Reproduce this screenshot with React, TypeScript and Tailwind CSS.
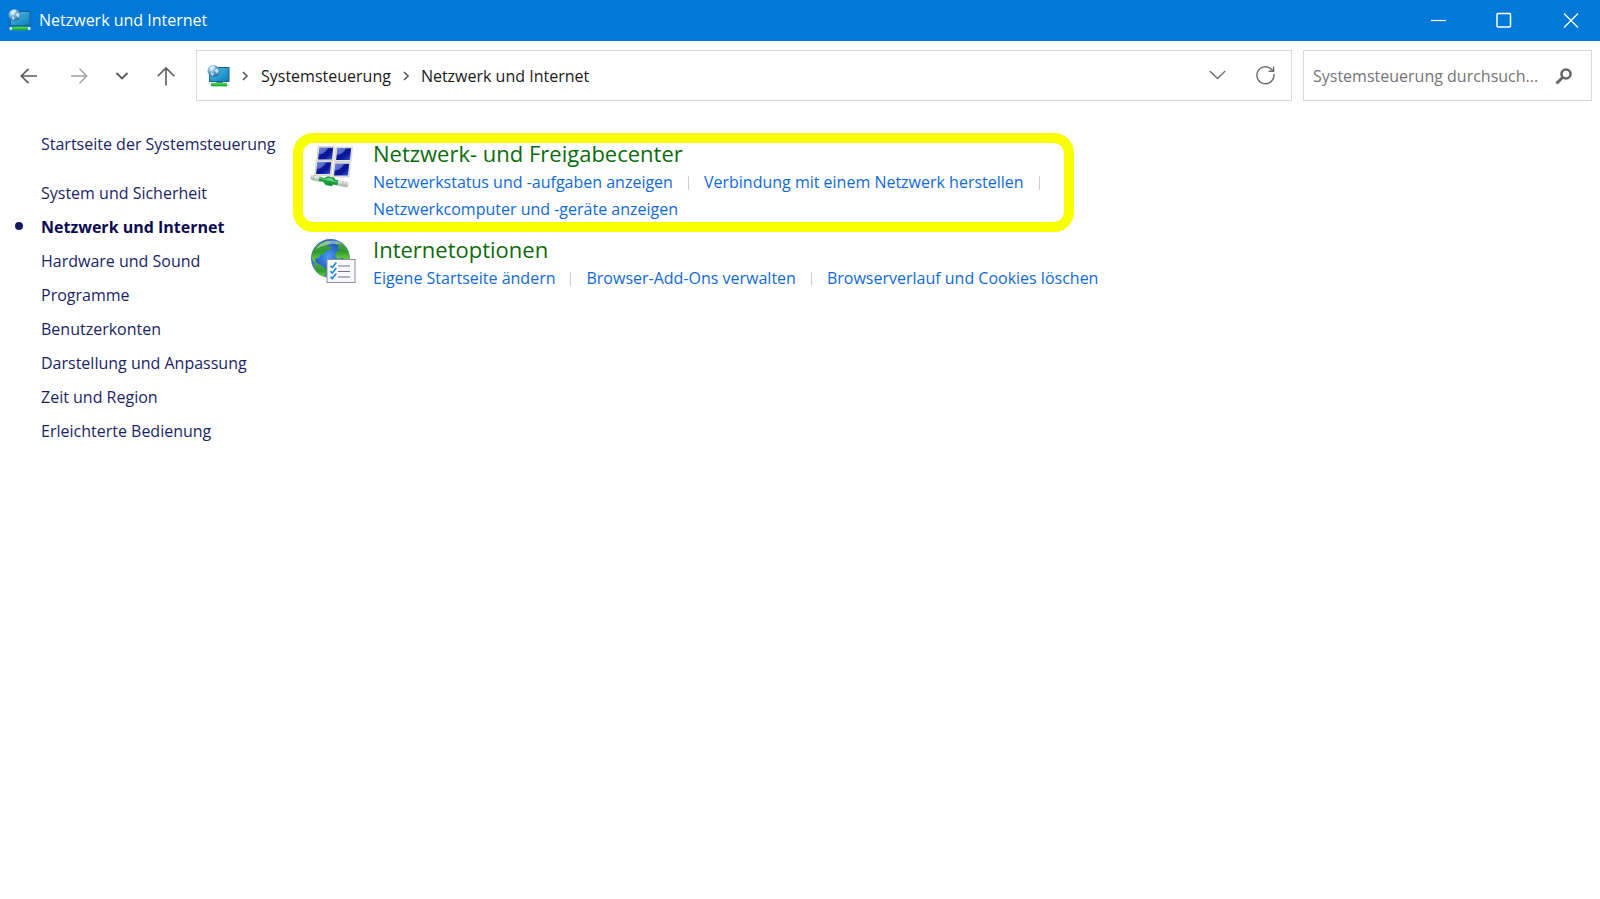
import { ReactNode } from 'react';

type Category = {
  title: string;
  icon: ReactNode;
  links: string[][];
  highlighted?: boolean;
};

const SIDEBAR_ITEMS = [
  'System und Sicherheit',
  'Netzwerk und Internet',
  'Hardware und Sound',
  'Programme',
  'Benutzerkonten',
  'Darstellung und Anpassung',
  'Zeit und Region',
  'Erleichterte Bedienung',
];

const ACTIVE_ITEM = 'Netzwerk und Internet';

const CATEGORIES: Category[] = [
  {
    title: 'Netzwerk- und Freigabecenter',
    icon: <SharingCenterIcon />,
    links: [
      ['Netzwerkstatus und -aufgaben anzeigen', 'Verbindung mit einem Netzwerk herstellen'],
      ['Netzwerkcomputer und -geräte anzeigen'],
    ],
    highlighted: true,
  },
  {
    title: 'Internetoptionen',
    icon: <InternetOptionsIcon />,
    links: [['Eigene Startseite ändern', 'Browser-Add-Ons verwalten', 'Browserverlauf und Cookies löschen']],
  },
];

function NetworkIcon({ id }: { id: string }) {
  return (
    <svg viewBox="0 0 24 24" className="h-6 w-6 shrink-0" aria-hidden="true">
      <defs>
        <linearGradient id={`${id}-screen`} x1="0" y1="0" x2="1" y2="1">
          <stop offset="0" stopColor="#5fbfe4" />
          <stop offset="0.5" stopColor="#2b9fd0" />
          <stop offset="1" stopColor="#0f7fc0" />
        </linearGradient>
        <radialGradient id={`${id}-globe`} cx="0.35" cy="0.3" r="0.8">
          <stop offset="0" stopColor="#c9e6f5" />
          <stop offset="0.5" stopColor="#62a5d0" />
          <stop offset="1" stopColor="#1b5f96" />
        </radialGradient>
      </defs>
      <rect x="2" y="3" width="20.5" height="15" rx="0.6" fill="#1c5f86" />
      <rect x="3" y="4" width="18.5" height="13" fill={`url(#${id}-screen)`} />
      <path d="M9.500 18h6l0.500 1.500h-7z" fill="#3c7d9a" />
      <rect x="1.500" y="19" width="21" height="3" rx="1" fill="#e3eaea" />
      <rect x="4" y="18.800" width="16" height="3.400" fill="#3ecf4c" />
      <rect x="4" y="20.800" width="16" height="1.400" fill="#1fa535" />
      <circle cx="6.500" cy="7" r="6" fill={`url(#${id}-globe)`} />
      <path d="M3 4c1.500-2 3.500-2.500 5-1.500 0.500 1-0.500 1.500-1 2-0.500 1.500-2 1.500-2.500 2.500-1-0.500-2-1.500-1.500-3zM8.500 5.500c1-0.800 2.500-0.500 3 0.500 0.300 1.500 0 2.500-1 3.500-1 0-1.200-1.200-2-1.500-0.600-0.800-0.500-1.800 0-2.500zM4.500 8.500c1 0 2 1 2 2-0.300 0.800-0.800 1.200-1.200 1.500-1-0.800-1.500-2.300-0.800-3.500z" fill="#e2f3fb" opacity="0.8" />
    </svg>
  );
}

function Monitor({ x, y }: { x: number; y: number }) {
  return (
    <g transform={`translate(${x} ${y})`}>
      <path d="M1.600 0h16.400l-1.400 14.500H0z" fill="#e4e4d9" stroke="#bdbdb2" strokeWidth="0.500" />
      <path d="M2.900 1.300h13.700l-1.200 11.600H1.600z" fill="url(#monitor-screen)" />
      <path d="M2.900 1.300h8.600c-1.500 3.700-4.500 6-9.200 6.700z" fill="#8fa2ee" opacity="0.55" />
    </g>
  );
}

function SharingCenterIcon() {
  return (
    <svg viewBox="0 0 46 46" className="h-[46px] w-[46px]" aria-hidden="true">
      <defs>
        <linearGradient id="monitor-screen" x1="0" y1="0" x2="1" y2="1">
          <stop offset="0" stopColor="#3b59cf" />
          <stop offset="0.450" stopColor="#0a1594" />
          <stop offset="0.650" stopColor="#0b1899" />
          <stop offset="1" stopColor="#3a5be0" />
        </linearGradient>
        <linearGradient id="cable" x1="0" y1="0" x2="0" y2="1">
          <stop offset="0" stopColor="#fafbfa" />
          <stop offset="1" stopColor="#a9b2ac" />
        </linearGradient>
      </defs>
      <Monitor x={6.500} y={3.500} />
      <Monitor x={24.500} y={4} />
      <Monitor x={4.500} y={18} />
      <Monitor x={22.500} y={19.500} />
      <g transform="rotate(12 19 38)">
        <rect x="0.500" y="35.500" width="11" height="4.800" rx="1.500" fill="url(#cable)" stroke="#a5aea7" strokeWidth="0.400" />
        <rect x="26" y="35.500" width="12.500" height="4.800" rx="1.500" fill="url(#cable)" stroke="#a5aea7" strokeWidth="0.400" />
        <path d="M9 36h5l3-2.500h6l2 2h3v5h-4l-1.500 2h-6l-3-2.500H9z" fill="#159a3c" />
        <path d="M10 36.800h5l3-2h4l1.500 2h3.500v1H10z" fill="#66d27a" />
        <path d="M3 35.500v4.800M33 35.500v4.800M36 35.500v4.800" stroke="#8f9a92" strokeWidth="0.600" />
      </g>
    </svg>
  );
}

function InternetOptionsIcon() {
  return (
    <svg viewBox="0 0 46 46" className="h-[46px] w-[46px]" aria-hidden="true">
      <defs>
        <radialGradient id="ocean" cx="0.450" cy="0.450" r="0.600">
          <stop offset="0" stopColor="#4a9af5" />
          <stop offset="0.600" stopColor="#2258c4" />
          <stop offset="1" stopColor="#7d9bcb" />
        </radialGradient>
        <linearGradient id="land" x1="0" y1="0" x2="0" y2="1">
          <stop offset="0" stopColor="#4f9f5c" />
          <stop offset="0.500" stopColor="#2f9c2c" />
          <stop offset="1" stopColor="#7bdc4a" />
        </linearGradient>
        <clipPath id="globe-edge">
          <circle cx="20.500" cy="19.500" r="19.500" />
        </clipPath>
      </defs>
      <circle cx="20.500" cy="19.500" r="19.500" fill="url(#ocean)" />
      <g clipPath="url(#globe-edge)" fill="url(#land)">
        <path d="M4 10C7 5 11 3 16 2l5 0-1 3-3 1 2 2 3-1-2 4-4 1-2 3-4 1-1 3-3 0-1 3 2 2-3-1-2-3 0-4z" />
        <path d="M3 24l4 0 4 2 4 3 2 3-2 4-1 4-5-2-3-5z" />
        <path d="M26 2l7 3 5 6 2 8-2 4-3 0-2-4-5 1-3-3 1-4 4-2-3-2 2-2-4-2z" />
        <path d="M26 21l5-1 5 2-3 8-6 5-2-6z" />
      </g>
      <path d="M6 10C11 2 24-1 32 5c-8-1-18 0-26 5z" fill="#fff" opacity="0.400" />
      <rect x="17" y="20.500" width="28" height="23" fill="#f7f8fb" stroke="#8c8f99" strokeWidth="1" />
      <path d="M28 27h12M28 32.500h12M28 38h12" stroke="#70747c" strokeWidth="1.100" />
      <path d="M20.500 26.700l1.800 1.800 4-5M20.500 32.200l1.800 1.800 4-5M20.500 37.700l1.800 1.800 4-5" fill="none" stroke="#1f86c9" strokeWidth="1.600" />
    </svg>
  );
}

function Stroke({ d, className, size = 20, width = 1.5 }: { d: string; className: string; size?: number; width?: number }) {
  return (
    <svg
      viewBox={`0 0 ${size} ${size}`}
      fill="none"
      stroke="currentColor"
      strokeWidth={width}
      className={className}
      aria-hidden="true"
    >
      <path d={d} />
    </svg>
  );
}

function TitleBar() {
  return (
    <header className="flex h-[41px] items-center bg-[#0078d7] pb-[2px] pl-2 text-white">
      <NetworkIcon id="title" />
      <h1 className="ml-[7px] flex-1 text-[16px]">Netzwerk und Internet</h1>
      <div className="flex h-full gap-2">
        <button aria-label="Minimieren" className="flex w-[58px] items-center justify-center">
          <Stroke d="M2 10.500h15" width={1.2} className="h-5 w-5" />
        </button>
        <button aria-label="Maximieren" className="flex w-[58px] items-center justify-center">
          <svg viewBox="0 0 20 20" fill="none" stroke="currentColor" strokeWidth="1.500" className="h-5 w-5" aria-hidden="true">
            <rect x="2" y="3.500" width="13.500" height="13.500" rx="1" />
          </svg>
        </button>
        <button aria-label="Schließen" className="flex w-[58px] items-center justify-center">
          <Stroke d="M3 3.500l14 14M17 3.500l-14 14" width={1.3} className="h-5 w-5" />
        </button>
      </div>
    </header>
  );
}

function Toolbar() {
  return (
    <div className="flex items-center pt-[9px] pr-2 pl-[11px]">
      <nav aria-label="Navigation" className="flex items-center gap-[14px] pr-[13px] text-[#5c5c5c]">
        <button aria-label="Zurück" className="flex h-9 w-9 items-center justify-center">
          <Stroke d="M18 10H2.500M9.500 2.800L2.300 10l7.200 7.200" width={1.7} className="h-5 w-5" />
        </button>
        <button aria-label="Vorwärts" className="flex h-9 w-9 items-center justify-center text-[#a0a0a0]">
          <Stroke d="M2 10h15.500M10.500 2.800l7.200 7.200-7.200 7.200" width={1.5} className="h-5 w-5" />
        </button>
        <button aria-label="Zuletzt besucht" className="flex h-9 w-[22px] items-center justify-center">
          <Stroke d="M4.500 7l5.500 5.500L15.500 7" width={1.9} className="h-5 w-5" />
        </button>
        <button aria-label="Nach oben" className="flex h-9 w-9 items-center justify-center">
          <Stroke d="M11 19.500V2M2.700 10.300L11 2l8.300 8.300" width={1.6} className="h-5 w-5" />
        </button>
      </nav>

      <div className="flex h-[51px] flex-1 items-center border border-[#d9d9d9] pr-[9px] pl-[10px] text-[16px] text-[#191919]">
        <NetworkIcon id="address" />
        <Stroke d="M3 2l4 4-4 4" size={12} width={1.7} className="mx-[9px] h-3 w-3 text-[#5c5c5c]" />
        <a href="#systemsteuerung">Systemsteuerung</a>
        <Stroke d="M4 2l4 4-4 4" size={12} width={1.7} className="mx-[9px] h-3 w-3 text-[#5c5c5c]" />
        <a href="#netzwerk">Netzwerk und Internet</a>
        <button aria-label="Vorherige Orte" className="ml-auto flex h-9 w-8 items-center justify-center text-[#6b6b6b]">
          <Stroke d="M1.800 5L9.500 12.500l7.700-7.500" width={1.3} className="h-5 w-5" />
        </button>
        <button aria-label="Aktualisieren" className="ml-4 flex h-9 w-8 items-center justify-center text-[#6b6b6b]">
          <Stroke d="M17.800 7.800a8.500 8.500 0 1 1-2.300-4.500l1.600 1.700M17.600 0.500v4.700h-5" width={1.4} className="h-5 w-5" />
        </button>
      </div>

      <label className="ml-[11px] flex h-[51px] w-[289px] items-center border border-[#d9d9d9] pr-[17px] pl-[9px]">
        <input
          type="text"
          aria-label="Systemsteuerung durchsuchen"
          placeholder="Systemsteuerung durchsuch..."
          className="min-w-0 flex-1 text-[16px] outline-none placeholder:text-[#757575]"
        />
        <svg viewBox="0 0 20 20" fill="none" stroke="#666" className="h-5 w-5 shrink-0" aria-hidden="true">
          <circle cx="12" cy="8" r="4.500" strokeWidth="2.600" />
          <path d="M8.800 11.200L2.500 17.500" strokeWidth="3" />
        </svg>
      </label>
    </div>
  );
}

function Sidebar() {
  return (
    <aside className="w-[293px] shrink-0 pt-[26px] pl-[41px] text-[16px] leading-[34px] text-[#1a1f66]">
      <a href="#start" className="block">Startseite der Systemsteuerung</a>
      <ul className="mt-[15px]">
        {SIDEBAR_ITEMS.map((item) => (
          <li key={item} className="relative">
            {item === ACTIVE_ITEM && (
              <span className="absolute top-[12px] -left-[26px] h-2 w-2 rounded-full bg-[#151a5e]" />
            )}
            <a href="#kategorie" className={item === ACTIVE_ITEM ? 'font-bold text-[#0a0a50]' : ''}>{item}</a>
          </li>
        ))}
      </ul>
    </aside>
  );
}

function CategoryRow({ title, icon, links, highlighted }: Category) {
  return (
    <section className="relative flex w-full max-w-[781px] gap-[17px] pl-[17px]">
      {highlighted && (
        <div className="pointer-events-none absolute inset-x-0 -top-[6px] -bottom-[9px] rounded-[20px] border-[10px] border-[#f7ff00]" />
      )}
      <div className="shrink-0 pt-1">{icon}</div>
      <div className="min-w-0">
        <h2 className="mb-[2px] text-[22px] leading-[28px] text-[#0b6b0b]">
          <a href="#bereich">{title}</a>
        </h2>
        {links.map((row, r) => (
          <ul key={r} className="flex text-[16px] leading-[27px] whitespace-nowrap text-[#0f6ad8]">
            {row.map((link, i) => (
              <li key={link} className="flex items-center">
                <a href="#aufgabe">{link}</a>
                {(i < row.length - 1 || r < links.length - 1) && (
                  <span className="mx-[15px] h-[14px] w-px bg-[#cfcfcf]" />
                )}
              </li>
            ))}
          </ul>
        ))}
      </div>
    </section>
  );
}

export default function App() {
  return (
    <div className="min-h-screen bg-white font-['Open_Sans','Noto_Sans',sans-serif]">
      <TitleBar />
      <Toolbar />
      <div className="flex">
        <Sidebar />
        <main className="flex min-w-0 flex-1 flex-col gap-3 pt-[38px]">
          {CATEGORIES.map((category) => (
            <CategoryRow key={category.title} {...category} />
          ))}
        </main>
      </div>
    </div>
  );
}
